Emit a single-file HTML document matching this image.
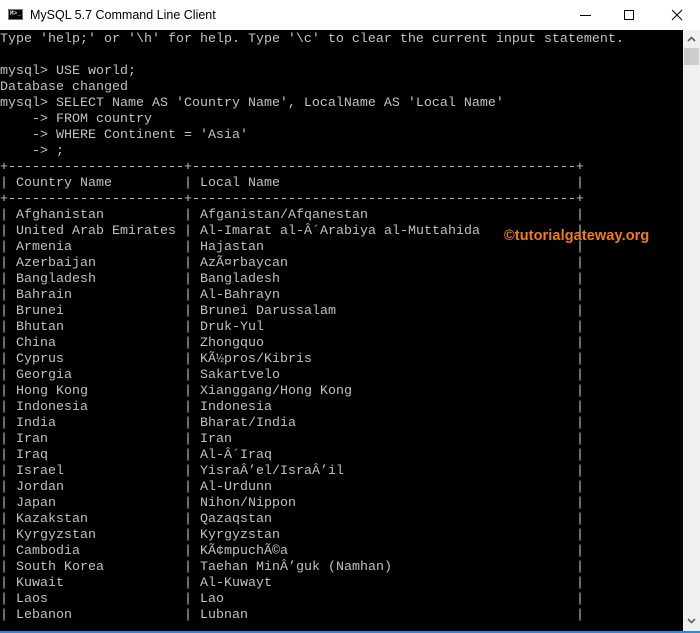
<!DOCTYPE html>
<html><head><meta charset="utf-8">
<style>
html,body{margin:0;padding:0;width:700px;height:633px;overflow:hidden;background:#fff}
#title{position:absolute;left:0;top:0;width:700px;height:30px;background:#fff;font-family:"Liberation Sans",sans-serif;font-size:12.5px;color:#000}
#title .t{position:absolute;left:30px;top:8px}
#icon{position:absolute;left:8px;top:9px;width:15px;height:11px;background:#000;border:1px solid #777;box-sizing:border-box}
#icon span{position:absolute;left:1px;top:1px;font:bold 6px "Liberation Mono",monospace;color:#ddd;line-height:6px}
#con{position:absolute;left:0;top:30px;width:683px;height:601px;background:#000;overflow:hidden;padding-top:2px;box-sizing:border-box}
#con pre,#con .r{margin:0;font-family:"Liberation Mono",monospace;font-size:13.33px;line-height:16px;color:#c0c0c0;white-space:pre}
.r{position:relative;height:16px}
.r::before{content:"|";position:absolute;left:0}
.r::after{content:"|";position:absolute;left:576px}
.r .a{position:absolute;left:16px}
.r .b{position:absolute;left:200px}
.r .b::before{content:"|";position:absolute;left:-16px}
#sb{position:absolute;left:683px;top:30px;width:17px;height:601px;background:#f0f0f0}
#thumb{position:absolute;left:1px;top:18px;width:15px;height:17px;background:#cdcdcd}
#blue{position:absolute;left:0;top:631px;width:700px;height:2px;background:#2b8ae0}
#wm{position:absolute;left:504px;top:228px;font-family:"Liberation Sans",sans-serif;font-weight:bold;font-size:14.5px;color:#f27b22;letter-spacing:0.1px}
</style></head><body>
<div id="title"><div id="icon"><span>M&gt;_</span></div><div class="t">MySQL 5.7 Command Line Client</div>
<svg style="position:absolute;left:578px;top:8px" width="110" height="14">
<line x1="2" y1="7.5" x2="13" y2="7.5" stroke="#000" stroke-width="1"/>
<rect x="46.5" y="2.5" width="9" height="9" fill="none" stroke="#000" stroke-width="1"/>
<line x1="94" y1="2" x2="104" y2="12" stroke="#000" stroke-width="1"/>
<line x1="104" y1="2" x2="94" y2="12" stroke="#000" stroke-width="1"/>
</svg></div>
<div id="con">
<pre>Type 'help;' or '\h' for help. Type '\c' to clear the current input statement.

mysql&gt; USE world;
Database changed
mysql&gt; SELECT Name AS 'Country Name', LocalName AS 'Local Name'
    -&gt; FROM country
    -&gt; WHERE Continent = 'Asia'
    -&gt; ;
+----------------------+------------------------------------------------+</pre>
<div class="r"><span class="a">Country Name</span><span class="b">Local Name</span></div>
<pre>+----------------------+------------------------------------------------+</pre>
<div class="r"><span class="a">Afghanistan</span><span class="b">Afganistan/Afqanestan</span></div>
<div class="r"><span class="a">United Arab Emirates</span><span class="b">Al-Imarat al-Â´Arabiya al-Muttahida</span></div>
<div class="r"><span class="a">Armenia</span><span class="b">Hajastan</span></div>
<div class="r"><span class="a">Azerbaijan</span><span class="b">AzÃ¤rbaycan</span></div>
<div class="r"><span class="a">Bangladesh</span><span class="b">Bangladesh</span></div>
<div class="r"><span class="a">Bahrain</span><span class="b">Al-Bahrayn</span></div>
<div class="r"><span class="a">Brunei</span><span class="b">Brunei Darussalam</span></div>
<div class="r"><span class="a">Bhutan</span><span class="b">Druk-Yul</span></div>
<div class="r"><span class="a">China</span><span class="b">Zhongquo</span></div>
<div class="r"><span class="a">Cyprus</span><span class="b">KÃ½pros/Kibris</span></div>
<div class="r"><span class="a">Georgia</span><span class="b">Sakartvelo</span></div>
<div class="r"><span class="a">Hong Kong</span><span class="b">Xianggang/Hong Kong</span></div>
<div class="r"><span class="a">Indonesia</span><span class="b">Indonesia</span></div>
<div class="r"><span class="a">India</span><span class="b">Bharat/India</span></div>
<div class="r"><span class="a">Iran</span><span class="b">Iran</span></div>
<div class="r"><span class="a">Iraq</span><span class="b">Al-Â´Iraq</span></div>
<div class="r"><span class="a">Israel</span><span class="b">YisraÂ’el/IsraÂ’il</span></div>
<div class="r"><span class="a">Jordan</span><span class="b">Al-Urdunn</span></div>
<div class="r"><span class="a">Japan</span><span class="b">Nihon/Nippon</span></div>
<div class="r"><span class="a">Kazakstan</span><span class="b">Qazaqstan</span></div>
<div class="r"><span class="a">Kyrgyzstan</span><span class="b">Kyrgyzstan</span></div>
<div class="r"><span class="a">Cambodia</span><span class="b">KÃ¢mpuchÃ©a</span></div>
<div class="r"><span class="a">South Korea</span><span class="b">Taehan MinÂ’guk (Namhan)</span></div>
<div class="r"><span class="a">Kuwait</span><span class="b">Al-Kuwayt</span></div>
<div class="r"><span class="a">Laos</span><span class="b">Lao</span></div>
<div class="r"><span class="a">Lebanon</span><span class="b">Lubnan</span></div>
</div>
<div id="wm">©tutorialgateway.org</div>
<div id="sb"><svg style="position:absolute;left:4px;top:6px" width="9" height="6"><polyline points="1,5 4.5,1.5 8,5" fill="none" stroke="#606060" stroke-width="1.6"/></svg><div id="thumb"></div>
<svg style="position:absolute;left:4px;top:588px" width="9" height="6"><polyline points="1,1 4.5,4.5 8,1" fill="none" stroke="#606060" stroke-width="1.6"/></svg></div>
<div id="blue"></div>
</body></html>
